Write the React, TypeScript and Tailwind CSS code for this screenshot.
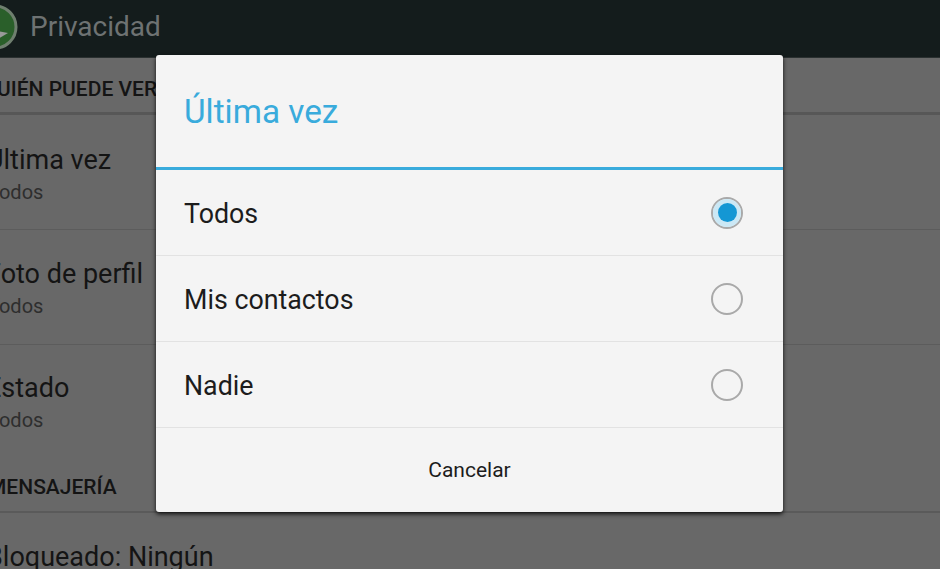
import React from "react";

function Item({ title, sub, h }: { title: string; sub: string; h: string }) {
  return (
    <div className={h}>
      <div className="text-[27px] leading-[32px] text-[#141414] -ml-[14px]">{title}</div>
      <div className="text-[20px] leading-[24px] mt-[4px] text-[#2e2e2e] -ml-[12px]">{sub}</div>
    </div>
  );
}

function Radio({ on }: { on?: boolean }) {
  return (
    <div className="w-[32px] h-[32px] rounded-full border-[2px] border-[#a9a9a9] flex items-center justify-center bg-[#f4f4f4]">
      {on && (
        <div className="w-[28px] h-[28px] rounded-full bg-[#cbe8f5] flex items-center justify-center">
          <div className="w-[19px] h-[19px] rounded-full bg-[#1497d4]" />
        </div>
      )}
    </div>
  );
}

function Row({ label, on }: { label: string; on?: boolean }) {
  return (
    <div className="h-[86px] border-b border-[#e2e2e2] flex items-center justify-between pl-[28px] pr-[40px]">
      <span className="text-[26.8px] text-[#1c1c1c] mt-[3px]">{label}</span>
      <Radio on={on} />
    </div>
  );
}

export default function App() {
  return (
    <div className="relative w-[940px] h-[569px] overflow-hidden bg-[#686868] font-['Roboto',sans-serif]">
      <div className="h-[58px] bg-[#141c1c] flex items-center border-b border-[#2a3030] pb-[4px]">
        <svg width="30" height="48" viewBox="0 0 30 48" className="shrink-0">
          <circle cx="-5" cy="24" r="21" fill="#2a5f2a" stroke="#6f7f6f" strokeWidth="3" />
          <path d="M-8 27 L8 30 L-2 36 Z" fill="#9a9a9a" />
        </svg>
        <span className="text-[28px] text-[#6e7272]">Privacidad</span>
      </div>
      <div className="h-[57px] border-b-[3px] border-[#575757] pt-[19px] text-[21px] leading-[24px] font-medium text-[#141414] whitespace-nowrap">
        <div className="-ml-[3px]">UIÉN PUEDE VER</div>
      </div>
      <div className="border-b border-[#5c5c5c]">
        <Item h="h-[114px] pt-[29px]" title="Última vez" sub="Todos" />
      </div>
      <div className="border-b border-[#5c5c5c]">
        <Item h="h-[114px] pt-[28px]" title="Foto de perfil" sub="Todos" />
      </div>
      <Item h="h-[112px] pt-[27px]" title="Estado" sub="Todos" />
      <div className="h-[56px] border-b-[2px] border-[#5a5a5a] pt-[18px] text-[21px] leading-[24px] font-medium text-[#141414] whitespace-nowrap">
        <div className="-ml-[12px]">MENSAJERÍA</div>
      </div>
      <div className="pt-[28px] text-[27px] leading-[32px] text-[#141414] -ml-[14px]">Bloqueado: Ningún</div>

      <div className="absolute left-[156px] top-[55px] w-[627px] h-[457px] bg-[#f4f4f4] rounded-[3px] shadow-[0_2px_4px_rgba(0,0,0,0.85)] flex flex-col">
        <div className="h-[115px] border-b-[3px] border-[#39abdc] flex items-center pl-[28px] shrink-0">
          <span className="text-[33.3px] text-[#39abdc] mt-[1px]">Última vez</span>
        </div>
        <Row label="Todos" on />
        <Row label="Mis contactos" />
        <Row label="Nadie" />
        <div className="flex-1 flex items-center justify-center text-[21px] text-[#1c1c1c] pt-[1px]">Cancelar</div>
      </div>
    </div>
  );
}
